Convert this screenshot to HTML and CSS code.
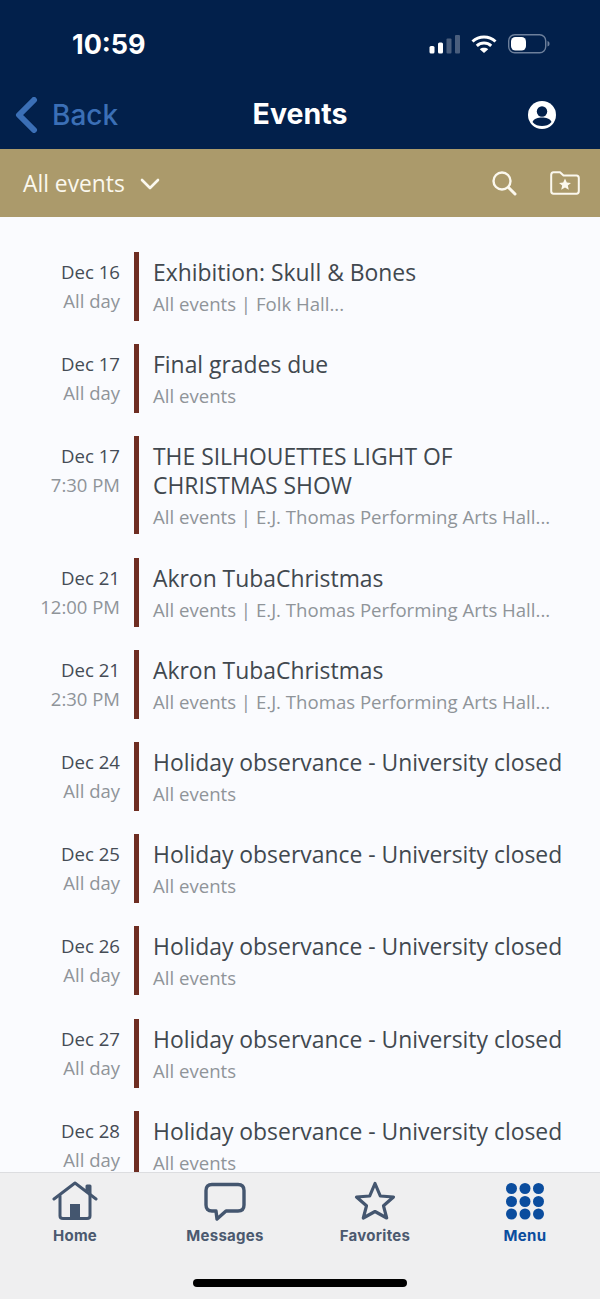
FILE: index.html
```html
<!DOCTYPE html>
<html lang="en">

<head>
    <meta charset="UTF-8">
    <meta name="viewport" content="width=device-width, initial-scale=1.0">
    <title>Events</title>
    <link rel="stylesheet" href="styles.css">
</head>

<body>
    <div class="phone">

        <header class="top">
            <div class="status">
                <span class="clock">10:59</span>
                <div class="status-icons">
                    <svg width="31" height="20" viewBox="0 0 31 20">
                        <rect x="0.5" y="12" width="5" height="7.500" rx="1.500" fill="#fff" />
                        <rect x="9" y="8.500" width="5" height="11" rx="1.500" fill="#fff" />
                        <rect x="17.500" y="4.500" width="5" height="15" rx="1" fill="#4a5e7d" />
                        <rect x="26" y="1" width="5" height="18.500" rx="1" fill="#4a5e7d" />
                    </svg>
                    <svg width="26" height="20" viewBox="0 0 26 20" fill="none" stroke="#fff" stroke-width="3">
                        <path d="M1.500 7.500 C8 1.500 18 1.500 24.500 7.500" />
                        <path d="M5.800 11.800 C10 8 16 8 20.200 11.800" />
                        <path d="M13 19 L8.800 15.200 C11 13.400 15 13.400 17.200 15.200 Z" fill="#fff" stroke="none" />
                    </svg>
                    <svg width="42" height="20" viewBox="0 0 42 20">
                        <rect x="0.700" y="0.700" width="37" height="18" rx="6" fill="none" stroke="#6d7f9b" stroke-width="1.400" />
                        <rect x="3" y="3" width="15" height="13.500" rx="4.500" fill="#fff" />
                        <path d="M39.500 7 C41 7.500 41.500 8.500 41.500 9.700 C41.500 11 41 12 39.500 12.500 Z" fill="#6d7f9b" />
                    </svg>
                </div>
            </div>
            <div class="nav">
                <div class="back">
                    <svg width="24" height="36" viewBox="0 0 24 36" fill="none" stroke="#3b6fb6" stroke-width="6" stroke-linecap="round" stroke-linejoin="round">
                        <path d="M20 3 L5 18 L20 33" />
                    </svg>
                    <span>Back</span>
                </div>
                <div class="nav-title">Events</div>
                <svg class="avatar" width="30" height="30" viewBox="0 0 30 30">
                    <circle cx="15" cy="15" r="14" fill="#fff" />
                    <circle cx="15" cy="11.500" r="5.200" fill="#02204b" />
                    <path d="M5.500 22 C7 18.500 11 17.500 15 17.500 C19 17.500 23 18.500 24.500 22 C22 25 18.500 26 15 26 C11.500 26 8 25 5.500 22 Z" fill="#02204b" />
                </svg>
            </div>
        </header>

        <div class="filter">
            <div class="filter-left">
                <span>All events</span>
                <svg width="20" height="12" viewBox="0 0 20 12" fill="none" stroke="#fbf8ee" stroke-width="2.600" stroke-linecap="round" stroke-linejoin="round">
                    <path d="M2 2 L10 10 L18 2" />
                </svg>
            </div>
            <div class="filter-right">
                <svg width="26" height="26" viewBox="0 0 26 26" fill="none" stroke="#fbf8ee" stroke-width="2.400" stroke-linecap="round">
                    <circle cx="11" cy="11" r="8.500" />
                    <path d="M17.500 17.500 L24 24" stroke-width="3" />
                </svg>
                <svg width="30" height="24" viewBox="0 0 30 24">
                    <path d="M1.200 4 Q1.200 1.200 3.500 1.200 L10 1.200 L13.500 4.500 L26.500 4.500 Q28.800 4.500 28.800 7 L28.800 20 Q28.800 22.800 26.500 22.800 L3.500 22.800 Q1.200 22.800 1.200 20 Z" fill="none" stroke="#fbf8ee" stroke-width="2" stroke-linejoin="round" />
                    <path d="M15 7.500 L16.800 11.500 L21 11.900 L17.800 14.600 L18.800 18.800 L15 16.500 L11.200 18.800 L12.200 14.600 L9 11.900 L13.200 11.500 Z" fill="#fbf8ee" />
                </svg>
            </div>
        </div>

        <main class="events">
            <div class="event">
                <div class="when"><div class="date">Dec 16</div><div class="time">All day</div></div>
                <div class="what"><div class="name">Exhibition: Skull &amp; Bones</div><div class="place">All events | Folk Hall...</div></div>
            </div>
            <div class="event">
                <div class="when"><div class="date">Dec 17</div><div class="time">All day</div></div>
                <div class="what"><div class="name">Final grades due</div><div class="place">All events</div></div>
            </div>
            <div class="event">
                <div class="when"><div class="date">Dec 17</div><div class="time">7:30 PM</div></div>
                <div class="what"><div class="name">THE SILHOUETTES LIGHT OF CHRISTMAS SHOW</div><div class="place">All events | E.J. Thomas Performing Arts Hall...</div></div>
            </div>
            <div class="event">
                <div class="when"><div class="date">Dec 21</div><div class="time">12:00 PM</div></div>
                <div class="what"><div class="name">Akron TubaChristmas</div><div class="place">All events | E.J. Thomas Performing Arts Hall...</div></div>
            </div>
            <div class="event">
                <div class="when"><div class="date">Dec 21</div><div class="time">2:30 PM</div></div>
                <div class="what"><div class="name">Akron TubaChristmas</div><div class="place">All events | E.J. Thomas Performing Arts Hall...</div></div>
            </div>
            <div class="event">
                <div class="when"><div class="date">Dec 24</div><div class="time">All day</div></div>
                <div class="what"><div class="name">Holiday observance - University closed</div><div class="place">All events</div></div>
            </div>
            <div class="event">
                <div class="when"><div class="date">Dec 25</div><div class="time">All day</div></div>
                <div class="what"><div class="name">Holiday observance - University closed</div><div class="place">All events</div></div>
            </div>
            <div class="event">
                <div class="when"><div class="date">Dec 26</div><div class="time">All day</div></div>
                <div class="what"><div class="name">Holiday observance - University closed</div><div class="place">All events</div></div>
            </div>
            <div class="event">
                <div class="when"><div class="date">Dec 27</div><div class="time">All day</div></div>
                <div class="what"><div class="name">Holiday observance - University closed</div><div class="place">All events</div></div>
            </div>
            <div class="event">
                <div class="when"><div class="date">Dec 28</div><div class="time">All day</div></div>
                <div class="what"><div class="name">Holiday observance - University closed</div><div class="place">All events</div></div>
            </div>
        </main>

        <nav class="tabs">
            <div class="tab">
                <svg width="46" height="42" viewBox="0 0 46 42" fill="none" stroke="#44566f" stroke-width="3" stroke-linejoin="round" stroke-linecap="round">
                    <path d="M2 18 L23 2 L44 18" />
                    <path d="M35 10 L35 5 L38 5 L38 14" />
                    <path d="M8 15 L8 35 Q8 37.500 11 37.500 L35 37.500 Q38 37.500 38 35 L38 15" />
                    <rect x="18" y="23" width="10" height="15" fill="#44566f" stroke="none" />
                </svg>
                <span>Home</span>
            </div>
            <div class="tab">
                <svg width="46" height="42" viewBox="0 0 46 42" fill="none" stroke="#44566f" stroke-width="3.400" stroke-linejoin="round">
                    <path d="M10 3.500 L36 3.500 Q42 3.500 42 9.500 L42 24 Q42 30 36 30 L24 30 L15 38 L14 30 L10 30 Q4 30 4 24 L4 9.500 Q4 3.500 10 3.500 Z" />
                </svg>
                <span>Messages</span>
            </div>
            <div class="tab">
                <svg width="46" height="42" viewBox="0 0 46 42" fill="none" stroke="#44566f" stroke-width="3.200" stroke-linejoin="round">
                    <path d="M23 2.500 L28.300 15 L41.500 16 L31.500 24.800 L34.700 37 L23 30.500 L11.300 37 L14.500 24.800 L4.500 16 L17.700 15 Z" />
                </svg>
                <span>Favorites</span>
            </div>
            <div class="tab tab-active">
                <svg width="46" height="42" viewBox="0 0 46 42" fill="#0b4d9e">
                    <circle cx="9.500" cy="7.500" r="5.500" /><circle cx="23" cy="7.500" r="5.500" /><circle cx="36.500" cy="7.500" r="5.500" />
                    <circle cx="9.500" cy="20.500" r="5.500" /><circle cx="23" cy="20.500" r="5.500" /><circle cx="36.500" cy="20.500" r="5.500" />
                    <circle cx="9.500" cy="33" r="5.500" /><circle cx="23" cy="33" r="5.500" /><circle cx="36.500" cy="33" r="5.500" />
                </svg>
                <span>Menu</span>
            </div>
            <div class="home-bar"></div>
        </nav>

    </div>
</body>

</html>
```
FILE: styles.css
```css
html, body {
    margin: 0;
    padding: 0;
}

body {
    font-family: "Open Sans", sans-serif;
    background: #fafbfe;
}

.phone {
    width: 600px;
    height: 1299px;
    display: flex;
    flex-direction: column;
    overflow: hidden;
}

.top {
    height: 149px;
    background: #02204b;
    flex-shrink: 0;
    color: #fff;
}

.status {
    height: 90px;
    display: flex;
    justify-content: space-between;
    align-items: flex-start;
    padding: 27px 50px 0 72px;
    box-sizing: border-box;
}

.clock {
    font-family: Inter, sans-serif;
    font-weight: 700;
    font-size: 27px;
    line-height: 36px;
}

.status-icons {
    display: flex;
    gap: 11px;
    padding-top: 7px;
}

.nav {
    height: 59px;
    display: flex;
    align-items: center;
    justify-content: space-between;
    padding: 0 43px 10px 14px;
    position: relative;
}

.back {
    display: flex;
    align-items: center;
    gap: 14px;
    color: #3b6fb6;
    font-family: Inter, sans-serif;
    font-size: 28px;
    font-weight: 500;
    margin-top: -10px;
}

.avatar {
    margin-top: -10px;
}

.nav-title {
    position: absolute;
    left: 0;
    right: 0;
    top: 4px;
    text-align: center;
    font-family: Inter, sans-serif;
    font-weight: 700;
    font-size: 28.500px;
    line-height: 40px;
}

.filter {
    height: 68px;
    background: #ab9a6b;
    flex-shrink: 0;
    display: flex;
    align-items: center;
    justify-content: space-between;
    padding: 0 20px 0 23px;
    color: #fbf8ee;
}

.filter-left {
    display: flex;
    align-items: center;
    gap: 15px;
    font-size: 22.800px;
    line-height: 34px;
    padding-top: 1px;
}

.filter-right {
    display: flex;
    align-items: center;
    gap: 33px;
}

.events {
    flex: 1;
    min-height: 0;
    overflow: hidden;
    padding-top: 35px;
    display: flex;
    flex-direction: column;
    gap: 23.200px;
}

.event {
    display: flex;
    flex-shrink: 0;
}

.when {
    width: 120px;
    text-align: right;
    padding-top: 5px;
    flex-shrink: 0;
}

.date {
    font-size: 18.600px;
    line-height: 29px;
    color: #454c55;
}

.time {
    font-size: 18.500px;
    line-height: 29px;
    color: #8f9499;
}

.what {
    flex: 1;
    margin-left: 14px;
    border-left: 5px solid #6e2d22;
    padding: 6px 30px 2px 14px;
    min-width: 0;
}

.name {
    font-size: 22.900px;
    line-height: 29px;
    color: #41484f;
}

.place {
    font-size: 18.600px;
    line-height: 32px;
    padding-top: 1px;
    margin-bottom: -1px;
    color: #8f9499;
}

.tabs {
    height: 127px;
    flex-shrink: 0;
    background: #efeff0;
    border-top: 1px solid #dcdde0;
    box-sizing: border-box;
    display: grid;
    grid-template-columns: repeat(4, 150px);
    position: relative;
    z-index: 1;
}

.tab {
    display: flex;
    flex-direction: column;
    align-items: center;
    padding-top: 8px;
    gap: 3px;
    font-family: Inter, sans-serif;
    font-size: 15px;
    font-weight: 700;
    color: #4b596f;
    letter-spacing: 0.3px;
}

.tab-active {
    color: #0b4d9e;
}

.home-bar {
    position: absolute;
    left: 193px;
    bottom: 12px;
    width: 214px;
    height: 8px;
    border-radius: 4px;
    background: #000;
}
```
